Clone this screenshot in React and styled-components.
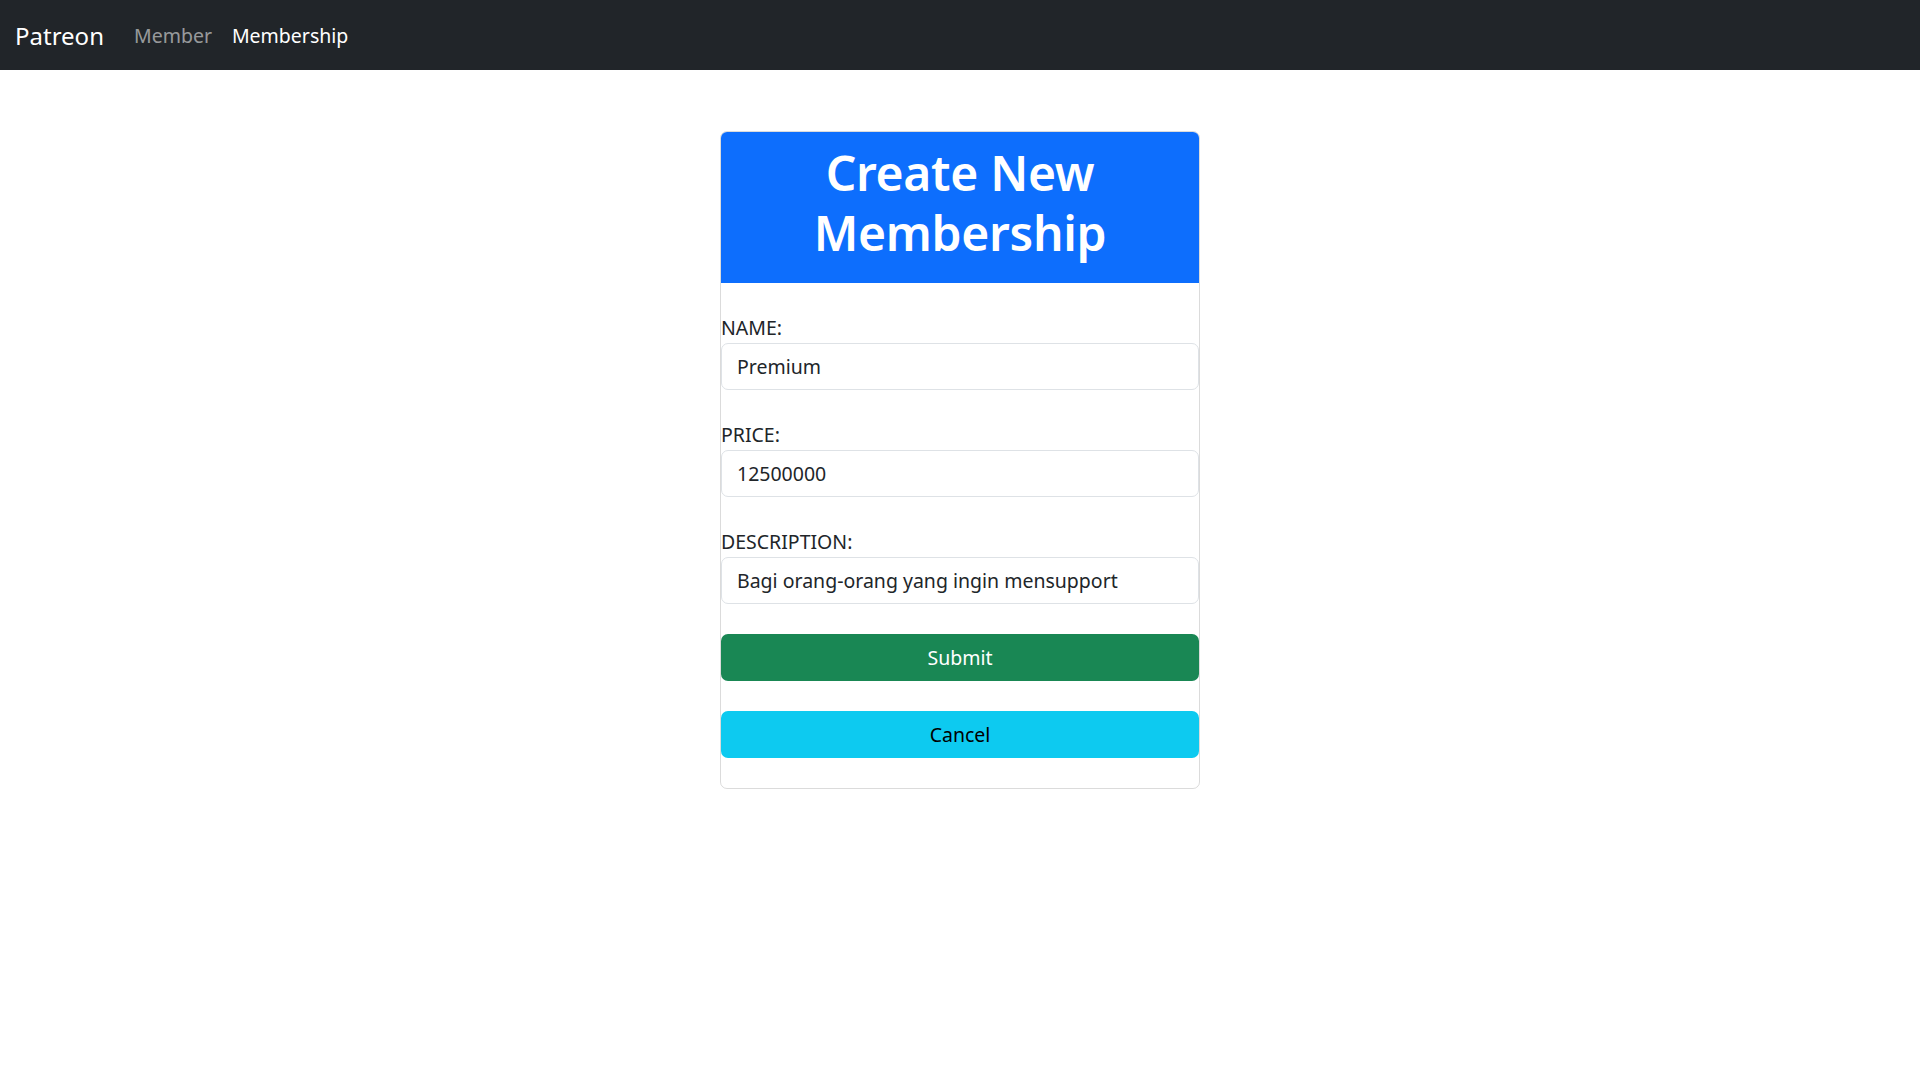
import styled, { createGlobalStyle } from "styled-components";

const GlobalStyle = createGlobalStyle`
    * { box-sizing: border-box; }
    body {
        margin: 0;
        background: #ffffff;
        color: #212529;
        font-family: "Noto Sans", "Open Sans", sans-serif;
    }
`

const NavBar = styled.nav`
    display: flex;
    align-items: center;
    height: 70px;
    padding: 0 15px;
    background-color: #212529;
`

const Brand = styled.a`
    font-size: 24px;
    color: #ffffff;
    margin-right: 20px;
    margin-left: 0;
    text-decoration: none;
`

const NavLink = styled.a`
    font-size: 19.5px;
    padding: 0 10px;
    color: ${(props)=>props.active ? "#ffffff" : "rgba(255,255,255,0.55)"};
    text-decoration: none;
`

const Page = styled.main`
    display: flex;
    justify-content: center;
    padding-top: 61px;
`

const Card = styled.div`
    width: 480px;
    border: 1px solid rgba(0,0,0,0.14);
    border-radius: 7px;
    overflow: hidden;
`

const CardHeader = styled.div`
    background-color: #0d6efd;
    height: 151px;
    display: flex;
    align-items: center;
    justify-content: center;
`

const Title = styled.h1`
    margin: 0 0 10px 0;
    color: #ffffff;
    font-size: 48px;
    font-weight: 600;
    line-height: 60px;
    text-align: center;
    letter-spacing: -0.3px;
`

const Form = styled.form`
    display: flex;
    flex-direction: column;
    gap: 30px;
    padding: 30px 0;
`

const Field = styled.div`
    display: flex;
    flex-direction: column;
`

const Label = styled.label`
    font-size: 19.5px;
    line-height: 30px;
    height: 30px;
    color: #212529;
`

const Input = styled.input`
    height: 47px;
    width: 100%;
    padding: 0 15px;
    font-family: inherit;
    font-size: 19.5px;
    color: #212529;
    border: 1px solid #dee2e6;
    border-radius: 7px;
    outline: none;
`

const Button = styled.button`
    height: 47px;
    width: 100%;
    border: none;
    border-radius: 7px;
    font-family: inherit;
    font-size: 19.5px;
    cursor: pointer;
    background-color: ${(props)=>props.bg};
    color: ${(props)=>props.fg};
`

export default function App(){
    return (
        <>
            <GlobalStyle/>
            <NavBar>
                <Brand href="#">Patreon</Brand>
                <NavLink href="#">Member</NavLink>
                <NavLink href="#" active>Membership</NavLink>
            </NavBar>
            <Page>
                <Card>
                    <CardHeader>
                        <Title>Create New<br/>Membership</Title>
                    </CardHeader>
                    <Form onSubmit={(e)=>e.preventDefault()}>
                        <Field>
                            <Label>NAME:</Label>
                            <Input type="text" defaultValue="Premium"/>
                        </Field>
                        <Field>
                            <Label>PRICE:</Label>
                            <Input type="text" defaultValue="12500000"/>
                        </Field>
                        <Field>
                            <Label>DESCRIPTION:</Label>
                            <Input type="text" defaultValue="Bagi orang-orang yang ingin mensupport"/>
                        </Field>
                        <Button type="submit" bg="#198754" fg="#ffffff">Submit</Button>
                        <Button type="button" bg="#0dcaf0" fg="#000000">Cancel</Button>
                    </Form>
                </Card>
            </Page>
        </>
    )
}
